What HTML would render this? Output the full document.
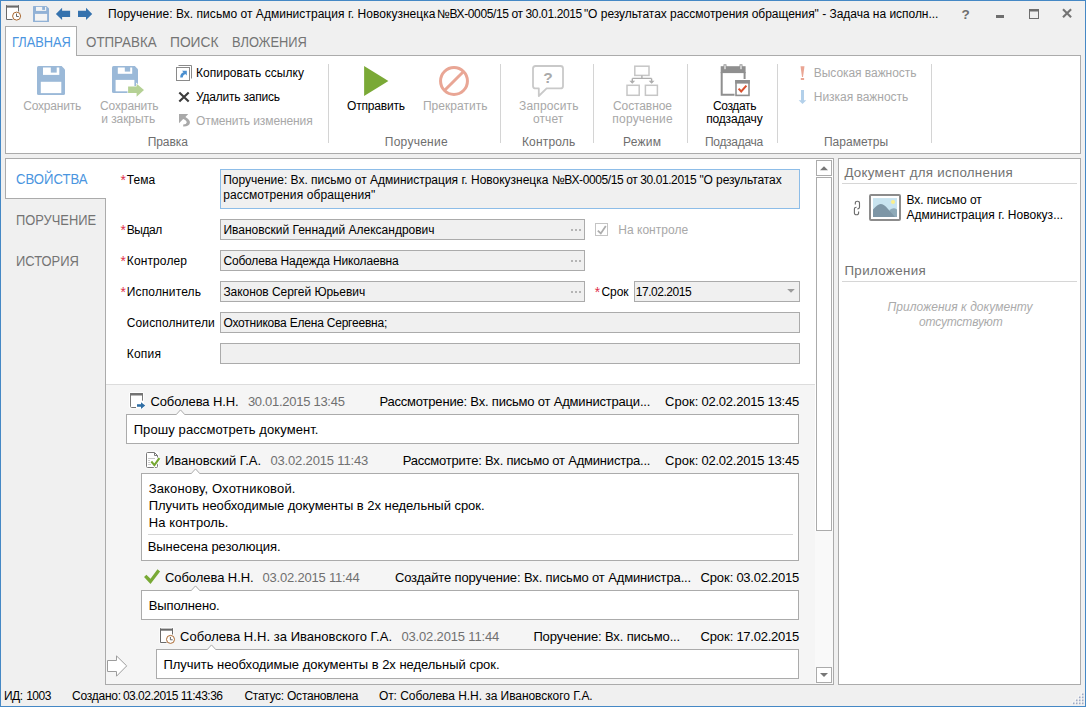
<!DOCTYPE html>
<html lang="ru"><head><meta charset="utf-8"><title>Поручение</title>
<style>
html,body{margin:0;padding:0}
body{width:1086px;height:707px;overflow:hidden;background:#f0f0f0;font-family:"Liberation Sans",sans-serif}
#win{position:relative;width:1086px;height:707px;overflow:hidden;background:#f0f0f0}
#win>*{position:absolute;box-sizing:border-box}
.t{white-space:nowrap;transform-origin:0 50%}
.b{border:1px solid #ababab;background:#fff}
.f{border:1px solid #ababab;background:#f0f0f0;height:21px}
.sep{width:1px;top:64px;height:79px;background:#d4d4d4}
.hl{height:1px;background:#d6d6d6}
svg{display:block;overflow:visible}
.q{white-space:nowrap}

</style></head>
<body>
<div id="win">
<!-- window frame -->
<div style="left:0;top:0;width:1086px;height:1px;background:#4588c5"></div>
<div style="left:0;top:706px;width:1086px;height:1px;background:#4588c5"></div>
<div style="left:0;top:0;width:1px;height:707px;background:#4588c5"></div>
<div style="left:1085px;top:0;width:1px;height:707px;background:#4588c5"></div>
<!-- ribbon -->
<div class="b" style="left:5px;top:55px;width:1076px;height:99px"></div>
<div class="b" style="left:5px;top:26px;width:72px;height:30px;border-bottom:none"></div>
<div class="sep" style="left:328px"></div>
<div class="sep" style="left:500px"></div>
<div class="sep" style="left:593px"></div>
<div class="sep" style="left:687px"></div>
<div class="sep" style="left:777px"></div>
<div class="sep" style="left:931px"></div>
<!-- main panel -->
<div class="b" style="left:105px;top:158px;width:729px;height:527px"></div>
<div class="b" style="left:5px;top:158px;width:101px;height:41px;border-right:none"></div>
<!-- history area -->
<div style="left:106px;top:384px;width:709px;height:300px;background:#f5f5f5;border-top:1px solid #dcdcdc"></div>
<!-- scrollbar -->
<div style="left:815px;top:531px;width:18px;height:153px;background:#f9f9f9"></div>
<div class="b" style="left:816px;top:160px;width:16px;height:16px"><svg width="14" height="14"><path d="M3,9.2 L7,5.2 L11,9.2 Z" fill="#777"/></svg></div>
<div class="b" style="left:816px;top:177px;width:16px;height:354px"></div>
<div class="b" style="left:816px;top:667px;width:16px;height:16px"><svg width="14" height="14"><path d="M3,5 L11,5 L7,9 Z" fill="#777"/></svg></div>
<!-- right panel -->
<div class="b" style="left:838px;top:158px;width:243px;height:527px"></div>
<div class="hl" style="left:842px;top:183px;width:235px"></div>
<div class="hl" style="left:842px;top:281px;width:235px"></div>
<!-- form fields -->
<div class="f" style="left:220px;top:169px;width:580px;height:40px;border-color:#8dbde8"></div>
<div class="f" style="left:220px;top:219px;width:365px"></div>
<div class="f" style="left:220px;top:250px;width:365px"></div>
<div class="f" style="left:220px;top:281px;width:365px"></div>
<div class="f" style="left:220px;top:312px;width:580px"></div>
<div class="f" style="left:220px;top:343px;width:580px"></div>
<div class="f" style="left:634px;top:281px;width:166px"></div>
<svg style="left:786px;top:288px" width="10" height="6"><path d="M1.2,1 L8.8,1 L5,4.8 Z" fill="#9c9c9c"/></svg>
<svg style="left:570px;top:229px" width="12" height="3"><path d="M1,0h2v2h-2z M5,0h2v2h-2z M9,0h2v2h-2z" fill="#b5b5b5"/></svg>
<svg style="left:570px;top:260px" width="12" height="3"><path d="M1,0h2v2h-2z M5,0h2v2h-2z M9,0h2v2h-2z" fill="#b5b5b5"/></svg>
<svg style="left:570px;top:291px" width="12" height="3"><path d="M1,0h2v2h-2z M5,0h2v2h-2z M9,0h2v2h-2z" fill="#b5b5b5"/></svg>
<div style="left:595px;top:223px;width:13px;height:13px;border:1px solid #c4c4c4;background:#fff"><svg width="11" height="11"><path d="M1.8,6.6 L4.8,9.4 L9.8,2" fill="none" stroke="#adadad" stroke-width="1.8"/></svg></div>
<!-- bubbles -->
<div class="b" style="left:126px;top:414px;width:673px;height:30px"></div>
<div class="b" style="left:141px;top:473px;width:658px;height:88px"></div>
<div class="b" style="left:141px;top:590px;width:658px;height:30px"></div>
<div class="b" style="left:156px;top:649px;width:643px;height:30px"></div>
<div class="hl" style="left:148px;top:534px;width:645px"></div>
<svg style="left:176px;top:409px" width="9" height="6"><rect x="0.6" y="5" width="7.8" height="1" fill="#fff"/><path d="M0.2,5.6 L4.5,0.9 L8.8,5.6" fill="#fff" stroke="#ababab"/></svg>
<svg style="left:191px;top:468px" width="9" height="6"><rect x="0.6" y="5" width="7.8" height="1" fill="#fff"/><path d="M0.2,5.6 L4.5,0.9 L8.8,5.6" fill="#fff" stroke="#ababab"/></svg>
<svg style="left:191px;top:585px" width="9" height="6"><rect x="0.6" y="5" width="7.8" height="1" fill="#fff"/><path d="M0.2,5.6 L4.5,0.9 L8.8,5.6" fill="#fff" stroke="#ababab"/></svg>
<svg style="left:207px;top:644px" width="9" height="6"><rect x="0.6" y="5" width="7.8" height="1" fill="#fff"/><path d="M0.2,5.6 L4.5,0.9 L8.8,5.6" fill="#fff" stroke="#ababab"/></svg>

<!-- title bar: app icon -->
<svg style="left:6px;top:5px" width="16" height="16" viewBox="0 0 16 16"><path d="M0.5,0.2 V14.5 H6.5 M12.5,0.2 V6.5" fill="none" stroke="#6a6a6a"/><rect x="1" y="2.5" width="11" height="11.5" fill="#fff"/><rect x="0" y="0.5" width="13" height="2.1" fill="#6a6a6a"/><circle cx="10.6" cy="11.1" r="4" fill="#fff" stroke="#a8672f" stroke-width="1"/><path d="M10.5,8.6 V11.5 H12.8" fill="none" stroke="#666" stroke-width="1"/></svg>
<!-- title bar: small save -->
<svg style="left:33px;top:6px" width="16" height="16" viewBox="0 0 16 16"><path d="M0.6,0 H13.4 L16,2.6 V15.4 Q16,16 15.4,16 H0.6 Q0,16 0,15.4 V0.6 Q0,0 0.6,0 Z" fill="#92b2d6"/><rect x="3" y="0.9" width="10.2" height="4" fill="#f4f4f4"/><rect x="9.2" y="0.3" width="2.8" height="3.6" fill="#92b2d6"/><rect x="2" y="7.9" width="12.1" height="6.8" fill="#f4f4f4"/></svg>
<!-- title bar: arrows -->
<svg style="left:55px;top:7px" width="16" height="14" viewBox="0 0 16 14"><path d="M0.9,6.9 L7.1,0.7 V3.8 H15.1 V9.9 H7.1 V13.1 Z" fill="#3572ae"/></svg>
<svg style="left:77px;top:7px" width="16" height="14" viewBox="0 0 16 14"><path d="M15.2,6.9 L9,0.7 V3.8 H1 V9.9 H9 V13.1 Z" fill="#3572ae"/></svg>
<!-- window controls -->
<svg style="left:996px;top:15px" width="8" height="3"><rect width="8" height="3" fill="#6e6e6e"/></svg>
<svg style="left:1029px;top:9px" width="10" height="10"><rect x="0.5" y="0.5" width="9" height="9" fill="none" stroke="#6e6e6e"/><rect x="0" y="0" width="10" height="2.5" fill="#6e6e6e"/></svg>
<svg style="left:1062px;top:8px" width="10" height="10"><path d="M1,1.2 L9.1,9.3 M9.1,1.2 L1,9.3" stroke="#747474" stroke-width="2.1" fill="none"/></svg>
<!-- ribbon: save big -->
<svg style="left:37px;top:66px" width="28" height="29" viewBox="0 0 28 29"><path d="M1.5,0 H24.6 L28,3.4 V27.5 Q28,29 26.5,29 H1.5 Q0,29 0,27.5 V1.5 Q0,0 1.5,0 Z" fill="#9bb9d8"/><rect x="6" y="1.5" width="16.3" height="7.4" fill="#fff"/><rect x="13.8" y="0.5" width="5.9" height="6.1" fill="#9bb9d8"/><rect x="3.8" y="15.8" width="20.5" height="11.3" fill="#fff"/></svg>
<!-- ribbon: save and close -->
<svg style="left:112px;top:66px" width="33" height="31" viewBox="0 0 33 31"><path d="M1.5,0 H22.8 L26,3.2 V25.5 Q26,27 24.5,27 H1.5 Q0,27 0,25.5 V1.5 Q0,0 1.5,0 Z" fill="#9bb9d8"/><rect x="5.8" y="1.5" width="14.4" height="6.3" fill="#fff"/><rect x="12.8" y="0.5" width="5.4" height="5.1" fill="#9bb9d8"/><rect x="3.6" y="13.9" width="18.8" height="11.4" fill="#fff"/><path d="M16.1,20.5 H24.6 V17.8 L32,24.1 L24.6,30.7 V27.1 H16.1 Z" fill="#b5d195" stroke="#fff" stroke-width="1.2" paint-order="stroke"/></svg>
<!-- ribbon: copy link -->
<svg style="left:176px;top:65px" width="17" height="17" viewBox="0 0 17 17"><path d="M2.5,0.5 H15.5 V13.5" fill="none" stroke="#8a8a8a"/><rect x="0.5" y="2.5" width="13" height="13" fill="#fff" stroke="#8a8a8a"/><path d="M6,5.8 H10.8 V10.6 L9.3,9.1 Q7,9.8 6.6,12.6 L4.2,12.4 Q4.2,8.4 7.5,7.3 Z" fill="#4a8fd0"/></svg>
<!-- ribbon: delete X -->
<svg style="left:178px;top:91px" width="12" height="12" viewBox="0 0 12 12"><path d="M1.3,1.4 L10.7,10.6 M10.7,1.4 L1.3,10.6" stroke="#3c3c3c" stroke-width="2.1" fill="none"/></svg>
<!-- ribbon: undo -->
<svg style="left:178px;top:113px" width="13" height="15" viewBox="0 0 13 15"><path d="M1,1.1 H10.2 L7.4,3.9 Q12.4,6.6 11.9,10 Q11.2,13.6 5.2,13.4 V11.6 Q8.4,11.7 8.7,9.6 Q9,7.7 5.2,6 L1,10.2 Z" fill="#a9a9a9"/></svg>
<!-- ribbon: play -->
<svg style="left:364px;top:66px" width="25" height="30" viewBox="0 0 25 30"><path d="M0.1,0.1 L24.4,15 L0.1,29.9 Z" fill="#7aa936"/></svg>
<!-- ribbon: stop -->
<svg style="left:439px;top:66px" width="30" height="30" viewBox="0 0 30 30"><circle cx="15" cy="15" r="13.45" fill="none" stroke="#e9a695" stroke-width="3"/><path d="M5.7,24.3 L24.3,5.7" stroke="#e9a695" stroke-width="3"/></svg>
<!-- ribbon: request report -->
<svg style="left:531px;top:64px" width="34" height="34" viewBox="0 0 34 34"><path d="M4.5,2 H29.5 Q32,2 32,4.5 V21.9 Q32,24.4 29.5,24.4 H15.6 L7.8,32 V24.4 H4.5 Q2,24.4 2,21.9 V4.5 Q2,2 4.5,2 Z" fill="#fff" stroke="#c9c9c9" stroke-width="1.8" stroke-linejoin="round"/></svg>
<span class="q" style="left:543.3px;top:70px;font-size:15.5px;line-height:16px;font-weight:bold;color:#aaaaaa">?</span>
<!-- ribbon: org chart -->
<svg style="left:626px;top:65px" width="32" height="31" viewBox="0 0 32 31"><g fill="#fff" stroke="#c6c6c6" stroke-width="1.5"><rect x="8.8" y="1.2" width="14.2" height="9.2"/><rect x="1" y="20.3" width="12.2" height="10"/><rect x="19.4" y="20.3" width="12" height="10"/></g><path d="M15.9,10.4 V13.4 M6.3,13.4 H25.6 M6.3,13.4 V18 M25.6,13.4 V18" fill="none" stroke="#adadad" stroke-width="1.4"/><path d="M3.4,15.8 H9.2 L6.3,18.8 Z M22.7,15.8 H28.5 L25.6,18.8 Z" fill="#adadad"/></svg>
<!-- ribbon: calendar w/ check -->
<svg style="left:720px;top:64px" width="31" height="33" viewBox="0 0 31 33"><path d="M1.7,8 V30.7 H14.5 M24.6,8 V15" fill="none" stroke="#8f8f8f" stroke-width="2"/><rect x="0.7" y="2.2" width="24.9" height="6.9" fill="#8f8f8f"/><rect x="4" y="0.8" width="2" height="4.9" fill="#fff" stroke="#8f8f8f" stroke-width="0.9"/><rect x="20" y="0.8" width="2" height="4.9" fill="#fff" stroke="#8f8f8f" stroke-width="0.9"/><rect x="16" y="16.8" width="13" height="14.6" fill="#fff" stroke="#8f8f8f" stroke-width="1.6"/><rect x="15.2" y="16" width="14.6" height="3.6" fill="#8f8f8f"/><path d="M18.6,24.6 L21.2,27.4 L26.4,21.6" fill="none" stroke="#d9502e" stroke-width="2"/></svg>
<!-- ribbon: importance -->
<svg style="left:800px;top:66px" width="5" height="15" viewBox="0 0 5 15"><path d="M0.5,0.2 H4.5 L3,11 H2 Z" fill="#eaa593"/><rect x="0.8" y="12" width="3.3" height="2" fill="#eaa593"/></svg>
<svg style="left:798px;top:90px" width="9" height="15" viewBox="0 0 9 15"><path d="M3,0.1 H6 V10.3 H8.3 L4.5,14.1 L0.7,10.3 H3 Z" fill="#b3d0ea"/></svg>
<!-- right panel: link icon + image icon -->
<svg style="left:853px;top:200px" width="8" height="16" viewBox="0 0 8 16"><path d="M2.3,4.4 V3.2 Q2.3,1.3 4.4,1.3 Q6.5,1.3 6.5,3.2 V7 Q6.5,8.9 4.4,8.9" fill="none" stroke="#6c6c6c" stroke-width="1.12"/><path d="M5.6,11.4 V13 Q5.6,14.8 3.5,14.8 Q1.4,14.8 1.4,13 V9 Q1.4,7.2 3.6,7.2" fill="none" stroke="#6c6c6c" stroke-width="1.12"/></svg>
<svg style="left:869px;top:194px" width="32" height="27" viewBox="0 0 32 27"><rect x="1" y="1" width="30" height="25" rx="1" fill="#fff" stroke="#8c8c8c" stroke-width="2"/><rect x="4" y="4.1" width="24" height="18.8" fill="#c8e4f0"/><path d="M20.5,16 Q24.5,12.6 28,15.4 V22.9 H20.5 Z" fill="#8eaab8"/><path d="M4,15.6 Q8.5,10.4 11.5,10 Q15,10 19,15 L26,22.9 H4 Z" fill="#7d96a6"/><circle cx="24" cy="7.9" r="2" fill="#fbf08a"/></svg>
<!-- history icon 1: calendar + arrow -->
<svg style="left:130px;top:393px" width="16" height="16" viewBox="0 0 16 16"><rect x="-0.9" y="-0.9" width="14.8" height="16.3" rx="1.5" fill="#fff"/><path d="M0.55,0.5 V13.4 Q0.55,14.5 1.6,14.5 H6 M12.45,0.5 V7.7" fill="none" stroke="#737373"/><rect x="1.1" y="2.5" width="10.8" height="11.5" fill="#fff"/><rect x="0.05" y="0" width="12.9" height="2.5" fill="#737373"/><path d="M7,11.2 H11 V9.2 L15.2,12.5 L11,16 V13.8 H7 Z" fill="#2e6da4" stroke="#fff" stroke-width="0.8" paint-order="stroke"/></svg>
<!-- history icon 2: doc + check -->
<svg style="left:146px;top:452px" width="14" height="16" viewBox="0 0 14 16"><rect x="-0.6" y="-0.6" width="13.4" height="17.2" rx="1.6" fill="#fff"/><path d="M1.5,0.5 H8.5 L11.5,3.5 V14.5 Q11.5,15.5 10.5,15.5 H1.5 Q0.5,15.5 0.5,14.5 V1.5 Q0.5,0.5 1.5,0.5 Z" fill="#fff" stroke="#7a7a7a"/><path d="M8.5,0.7 V3.5 H11.4" fill="none" stroke="#7a7a7a"/><path d="M2.1,6.5 H9 M2.1,8.5 H4 M2.1,10.5 H4 M2.1,12.5 H5" stroke="#c8c8c8"/><path d="M5.3,9.5 L8.4,13.1 L13.4,6.1" fill="none" stroke="#fff" stroke-width="3.8"/><path d="M5.3,9.5 L8.4,13.1 L13.4,6.1" fill="none" stroke="#76a832" stroke-width="2.1"/></svg>
<!-- history icon 3: check -->
<svg style="left:144px;top:569px" width="17" height="16" viewBox="0 0 17 16"><path d="M0.05,8.1 L2.4,5.7 L6.5,9.7 L13.5,0.2 L16.1,2.5 L6.5,15.1 Z" fill="#78a935"/></svg>
<!-- history icon 4: calendar + clock -->
<svg style="left:160px;top:628px" width="16" height="16" viewBox="0 0 16 16"><rect x="-0.7" y="-0.7" width="14.5" height="16.2" rx="1" fill="#fff" opacity="0.8"/><path d="M0.5,0.3 V14.5 H6.5 M12.5,0.3 V6.5" fill="none" stroke="#6a6a6a"/><rect x="1" y="2.5" width="11" height="11.5" fill="#fff"/><rect x="0" y="0.6" width="13" height="2.1" fill="#6a6a6a"/><circle cx="10.5" cy="11.4" r="4" fill="#fff" stroke="#a8672f" stroke-width="1"/><path d="M10.4,8.9 V11.8 H12.7" fill="none" stroke="#666" stroke-width="1"/></svg>
<!-- current marker arrow -->
<svg style="left:107px;top:655px" width="21" height="22" viewBox="0 0 21 22"><path d="M0.5,5.5 H9.5 V0.9 L19.7,10.9 L9.5,21.2 V16.5 H0.5 Z" fill="#fff" stroke="#9c9c9c"/></svg>
<!-- resize grip -->
<svg style="left:1071.6px;top:691.7px" width="13" height="13" viewBox="0 0 13 13"><g fill="#fbfbfb"><rect x="9.1" y="0.6" width="1.3" height="1.3"/><rect x="6.1" y="3.6" width="1.3" height="1.3"/><rect x="9.1" y="3.6" width="1.3" height="1.3"/><rect x="3.1" y="6.6" width="1.3" height="1.3"/><rect x="6.1" y="6.6" width="1.3" height="1.3"/><rect x="9.1" y="6.6" width="1.3" height="1.3"/><rect x="0.09999999999999998" y="9.6" width="1.3" height="1.3"/><rect x="3.1" y="9.6" width="1.3" height="1.3"/><rect x="6.1" y="9.6" width="1.3" height="1.3"/><rect x="9.1" y="9.6" width="1.3" height="1.3"/></g><g fill="#9fabc6"><rect x="10" y="1.5" width="1.5" height="1.7"/><rect x="7" y="4.5" width="1.5" height="1.7"/><rect x="10" y="4.5" width="1.5" height="1.7"/><rect x="4" y="7.5" width="1.5" height="1.7"/><rect x="7" y="7.5" width="1.5" height="1.7"/><rect x="10" y="7.5" width="1.5" height="1.7"/><rect x="1" y="10.5" width="1.5" height="1.7"/><rect x="4" y="10.5" width="1.5" height="1.7"/><rect x="7" y="10.5" width="1.5" height="1.7"/><rect x="10" y="10.5" width="1.5" height="1.7"/></g></svg>

<span class="t" id="t0" style="left:108.1px;top:8.0px;font-size:12px;line-height:12px;color:#000000;letter-spacing:0.034px;">Поручение: Вх. письмо от Администрация г. Новокузнецка </span>
<span class="t" id="t1" style="left:437.0px;top:8.0px;font-size:12px;line-height:12px;color:#000000;letter-spacing:-0.382px;">№ВХ-0005/15 от 30.01.2015 </span>
<span class="t" id="t2" style="left:583.9px;top:8.0px;font-size:12px;line-height:12px;color:#000000;letter-spacing:-0.027px;">"О результатах рассмотрения обращения" - Задача на исполн...</span>
<span class="t" id="t3" style="left:11.5px;top:34.6px;font-size:14.3px;line-height:14.3px;color:#4a95e0;transform:scaleX(0.8964);">ГЛАВНАЯ</span>
<span class="t" id="t4" style="left:85.6px;top:34.6px;font-size:14.3px;line-height:14.3px;color:#747474;transform:scaleX(0.9332);">ОТПРАВКА</span>
<span class="t" id="t5" style="left:170.1px;top:34.6px;font-size:14.3px;line-height:14.3px;color:#747474;transform:scaleX(0.9637);">ПОИСК</span>
<span class="t" id="t6" style="left:232.3px;top:34.6px;font-size:14.3px;line-height:14.3px;color:#747474;transform:scaleX(0.8999);">ВЛОЖЕНИЯ</span>
<span class="t" id="t7" style="left:23.2px;top:99.6px;font-size:12px;line-height:12px;color:#a8a8a8;letter-spacing:-0.182px;">Сохранить</span>
<span class="t" id="t8" style="left:100.1px;top:99.6px;font-size:12px;line-height:12px;color:#a8a8a8;letter-spacing:-0.149px;">Сохранить</span>
<span class="t" id="t9" style="left:101.3px;top:112.6px;font-size:12px;line-height:12px;color:#a8a8a8;letter-spacing:-0.080px;">и закрыть</span>
<span class="t" id="t10" style="left:196.0px;top:67.0px;font-size:12px;line-height:12px;color:#000000;letter-spacing:0.067px;">Копировать ссылку</span>
<span class="t" id="t11" style="left:196.0px;top:91.3px;font-size:12px;line-height:12px;color:#000000;letter-spacing:-0.213px;">Удалить запись</span>
<span class="t" id="t12" style="left:196.0px;top:114.6px;font-size:12px;line-height:12px;color:#a8a8a8;letter-spacing:-0.102px;">Отменить изменения</span>
<span class="t" id="t13" style="left:147.7px;top:136.0px;font-size:12px;line-height:12px;color:#6e6e6e;letter-spacing:-0.058px;">Правка</span>
<span class="t" id="t14" style="left:347.0px;top:99.6px;font-size:12px;line-height:12px;color:#000000;letter-spacing:-0.191px;">Отправить</span>
<span class="t" id="t15" style="left:422.9px;top:99.6px;font-size:12px;line-height:12px;color:#a8a8a8;letter-spacing:0.033px;">Прекратить</span>
<span class="t" id="t16" style="left:384.8px;top:136.0px;font-size:12px;line-height:12px;color:#6e6e6e;letter-spacing:0.258px;">Поручение</span>
<span class="t" id="t17" style="left:519.1px;top:99.6px;font-size:12px;line-height:12px;color:#a8a8a8;letter-spacing:0.142px;">Запросить</span>
<span class="t" id="t18" style="left:533.0px;top:112.6px;font-size:12px;line-height:12px;color:#a8a8a8;letter-spacing:0.092px;">отчет</span>
<span class="t" id="t19" style="left:521.9px;top:136.0px;font-size:12px;line-height:12px;color:#6e6e6e;letter-spacing:0.184px;">Контроль</span>
<span class="t" id="t20" style="left:613.0px;top:99.6px;font-size:12px;line-height:12px;color:#a8a8a8;letter-spacing:-0.104px;">Составное</span>
<span class="t" id="t21" style="left:612.3px;top:112.6px;font-size:12px;line-height:12px;color:#a8a8a8;letter-spacing:0.207px;">поручение</span>
<span class="t" id="t22" style="left:623.0px;top:136.0px;font-size:12px;line-height:12px;color:#6e6e6e;letter-spacing:0.220px;">Режим</span>
<span class="t" id="t23" style="left:712.9px;top:99.6px;font-size:12px;line-height:12px;color:#000000;letter-spacing:-0.330px;">Создать</span>
<span class="t" id="t24" style="left:706.2px;top:112.6px;font-size:12px;line-height:12px;color:#000000;letter-spacing:-0.161px;">подзадачу</span>
<span class="t" id="t25" style="left:704.9px;top:136.0px;font-size:12px;line-height:12px;color:#6e6e6e;letter-spacing:-0.274px;">Подзадача</span>
<span class="t" id="t26" style="left:813.8px;top:66.8px;font-size:12px;line-height:12px;color:#a8a8a8;letter-spacing:-0.053px;">Высокая важность</span>
<span class="t" id="t27" style="left:813.8px;top:90.7px;font-size:12px;line-height:12px;color:#a8a8a8;letter-spacing:-0.033px;">Низкая важность</span>
<span class="t" id="t28" style="left:823.9px;top:136.0px;font-size:12px;line-height:12px;color:#6e6e6e;letter-spacing:0.037px;">Параметры</span>
<span class="t" id="t29" style="left:16.0px;top:171.8px;font-size:14.3px;line-height:14.3px;color:#4a95e0;transform:scaleX(0.9170);">СВОЙСТВА</span>
<span class="t" id="t30" style="left:16.0px;top:212.5px;font-size:14.3px;line-height:14.3px;color:#747474;transform:scaleX(0.9009);">ПОРУЧЕНИЕ</span>
<span class="t" id="t31" style="left:16.0px;top:253.8px;font-size:14.3px;line-height:14.3px;color:#747474;transform:scaleX(0.9052);">ИСТОРИЯ</span>
<span class="t" id="t32" style="left:120.4px;top:174.0px;font-size:13.8px;line-height:13.8px;color:#e02f4a;letter-spacing:0.625px;">*</span>
<span class="t" id="t33" style="left:126.8px;top:174.0px;font-size:12px;line-height:12px;color:#000000;letter-spacing:0.034px;">Тема</span>
<span class="t" id="t34" style="left:120.4px;top:223.8px;font-size:13.8px;line-height:13.8px;color:#e02f4a;letter-spacing:0.625px;">*</span>
<span class="t" id="t35" style="left:126.8px;top:223.8px;font-size:12px;line-height:12px;color:#000000;letter-spacing:-0.442px;">Выдал</span>
<span class="t" id="t36" style="left:120.4px;top:254.8px;font-size:13.8px;line-height:13.8px;color:#e02f4a;letter-spacing:0.625px;">*</span>
<span class="t" id="t37" style="left:126.8px;top:254.8px;font-size:12px;line-height:12px;color:#000000;letter-spacing:0.118px;">Контролер</span>
<span class="t" id="t38" style="left:120.4px;top:285.6px;font-size:13.8px;line-height:13.8px;color:#e02f4a;letter-spacing:0.625px;">*</span>
<span class="t" id="t39" style="left:126.8px;top:285.6px;font-size:12px;line-height:12px;color:#000000;letter-spacing:0.139px;">Исполнитель</span>
<span class="t" id="t40" style="left:126.8px;top:316.7px;font-size:12px;line-height:12px;color:#000000;letter-spacing:0.113px;">Соисполнители</span>
<span class="t" id="t41" style="left:126.8px;top:347.7px;font-size:12px;line-height:12px;color:#000000;letter-spacing:0.205px;">Копия</span>
<span class="t" id="t42" style="left:594.7px;top:286.0px;font-size:13.8px;line-height:13.8px;color:#e02f4a;letter-spacing:0.625px;">*</span>
<span class="t" id="t43" style="left:601.4px;top:285.6px;font-size:12px;line-height:12px;color:#000000;letter-spacing:-0.016px;">Срок</span>
<span class="t" id="t44" style="left:223.2px;top:174.0px;font-size:12px;line-height:12px;color:#000000;letter-spacing:-0.006px;">Поручение: Вх. письмо от Администрация г. Новокузнецка </span>
<span class="t" id="t45" style="left:551.9px;top:174.0px;font-size:12px;line-height:12px;color:#000000;letter-spacing:-0.402px;">№ВХ-0005/15 от 30.01.2015 </span>
<span class="t" id="t46" style="left:699.4px;top:174.0px;font-size:12px;line-height:12px;color:#000000;letter-spacing:-0.075px;">"О результатах </span>
<span class="t" id="t47" style="left:223.2px;top:189.0px;font-size:12px;line-height:12px;color:#000000;letter-spacing:0.116px;">рассмотрения обращения"</span>
<span class="t" id="t48" style="left:223.4px;top:223.8px;font-size:12px;line-height:12px;color:#000000;letter-spacing:0.001px;">Ивановский Геннадий Александрович</span>
<span class="t" id="t49" style="left:223.4px;top:254.8px;font-size:12px;line-height:12px;color:#000000;letter-spacing:-0.165px;">Соболева Надежда Николаевна</span>
<span class="t" id="t50" style="left:223.4px;top:285.6px;font-size:12px;line-height:12px;color:#000000;letter-spacing:-0.054px;">Законов Сергей Юрьевич</span>
<span class="t" id="t51" style="left:223.4px;top:316.7px;font-size:12px;line-height:12px;color:#000000;letter-spacing:-0.211px;">Охотникова Елена Сергеевна;</span>
<span class="t" id="t52" style="left:635.8px;top:286.0px;font-size:12px;line-height:12px;color:#000000;letter-spacing:-0.476px;">17.02.2015</span>
<span class="t" id="t53" style="left:618.2px;top:224.0px;font-size:12px;line-height:12px;color:#a8a8a8;letter-spacing:0.034px;">На контроле</span>
<span class="t" id="t54" style="left:150.4px;top:394.7px;font-size:13px;line-height:13px;color:#000000;letter-spacing:-0.095px;">Соболева Н.Н.</span>
<span class="t" id="t55" style="left:247.9px;top:394.7px;font-size:13px;line-height:13px;color:#707070;letter-spacing:-0.282px;">30.01.2015 13:45</span>
<span class="t" id="t56" style="left:379.4px;top:394.7px;font-size:13px;line-height:13px;color:#000000;letter-spacing:-0.194px;">Рассмотрение: Вх. письмо от Администраци...</span>
<span class="t" id="t57" style="left:665.1px;top:395.0px;font-size:13px;line-height:13px;color:#000000;letter-spacing:0.009px;">Срок: </span>
<span class="t" id="t58" style="left:701.4px;top:395.0px;font-size:13px;line-height:13px;color:#000000;letter-spacing:-0.226px;">02.02.2015 13:45</span>
<span class="t" id="t59" style="left:133.7px;top:422.6px;font-size:13px;line-height:13px;color:#000000;letter-spacing:0.089px;">Прошу рассмотреть документ.</span>
<span class="t" id="t60" style="left:165.0px;top:453.7px;font-size:13px;line-height:13px;color:#000000;letter-spacing:-0.006px;">Ивановский Г.А.</span>
<span class="t" id="t61" style="left:270.4px;top:453.7px;font-size:13px;line-height:13px;color:#707070;letter-spacing:-0.159px;">03.02.2015 11:43</span>
<span class="t" id="t62" style="left:402.7px;top:453.7px;font-size:13px;line-height:13px;color:#000000;letter-spacing:-0.208px;">Рассмотрите: Вх. письмо от Администра...</span>
<span class="t" id="t63" style="left:665.1px;top:454.0px;font-size:13px;line-height:13px;color:#000000;letter-spacing:0.009px;">Срок: </span>
<span class="t" id="t64" style="left:701.4px;top:454.0px;font-size:13px;line-height:13px;color:#000000;letter-spacing:-0.226px;">02.02.2015 13:45</span>
<span class="t" id="t65" style="left:148.7px;top:481.6px;font-size:13px;line-height:13px;color:#000000;letter-spacing:0.169px;">Законову, Охотниковой.</span>
<span class="t" id="t66" style="left:148.7px;top:499.0px;font-size:13px;line-height:13px;color:#000000;letter-spacing:-0.030px;">Плучить необходимые документы в 2х недельный срок.</span>
<span class="t" id="t67" style="left:148.7px;top:516.0px;font-size:13px;line-height:13px;color:#000000;letter-spacing:0.110px;">На контроль.</span>
<span class="t" id="t68" style="left:147.7px;top:539.7px;font-size:13px;line-height:13px;color:#000000;letter-spacing:-0.048px;">Вынесена резолюция.</span>
<span class="t" id="t69" style="left:165.0px;top:570.5px;font-size:13px;line-height:13px;color:#000000;letter-spacing:-0.064px;">Соболева Н.Н.</span>
<span class="t" id="t70" style="left:262.4px;top:570.5px;font-size:13px;line-height:13px;color:#707070;letter-spacing:-0.191px;">03.02.2015 11:44</span>
<span class="t" id="t71" style="left:394.9px;top:570.5px;font-size:13px;line-height:13px;color:#000000;letter-spacing:-0.132px;">Создайте поручение: Вх. письмо от Администра...</span>
<span class="t" id="t72" style="left:700.4px;top:571.0px;font-size:13px;line-height:13px;color:#000000;letter-spacing:-0.071px;">Срок: </span>
<span class="t" id="t73" style="left:736.4px;top:571.0px;font-size:13px;line-height:13px;color:#000000;letter-spacing:-0.248px;">03.02.2015</span>
<span class="t" id="t74" style="left:148.7px;top:598.6px;font-size:13px;line-height:13px;color:#000000;letter-spacing:-0.112px;">Выполнено.</span>
<span class="t" id="t75" style="left:180.0px;top:629.6px;font-size:13px;line-height:13px;color:#000000;letter-spacing:0.047px;">Соболева Н.Н. за Ивановского Г.А.</span>
<span class="t" id="t76" style="left:401.4px;top:629.6px;font-size:13px;line-height:13px;color:#707070;letter-spacing:-0.159px;">03.02.2015 11:44</span>
<span class="t" id="t77" style="left:533.4px;top:629.6px;font-size:13px;line-height:13px;color:#000000;letter-spacing:-0.133px;">Поручение: Вх. письмо...</span>
<span class="t" id="t78" style="left:700.4px;top:630.0px;font-size:13px;line-height:13px;color:#000000;letter-spacing:-0.071px;">Срок: </span>
<span class="t" id="t79" style="left:736.4px;top:630.0px;font-size:13px;line-height:13px;color:#000000;letter-spacing:-0.248px;">17.02.2015</span>
<span class="t" id="t80" style="left:163.4px;top:658.0px;font-size:13px;line-height:13px;color:#000000;letter-spacing:-0.024px;">Плучить необходимые документы в 2х недельный срок.</span>
<span class="t" id="t81" style="left:3.9px;top:690.0px;font-size:12px;line-height:12px;color:#000000;letter-spacing:-0.431px;">ИД: </span>
<span class="t" id="t82" style="left:26.2px;top:690.0px;font-size:12px;line-height:12px;color:#000000;letter-spacing:-0.501px;">1003</span>
<span class="t" id="t83" style="left:72.0px;top:690.0px;font-size:12px;line-height:12px;color:#000000;letter-spacing:-0.246px;">Создано: </span>
<span class="t" id="t84" style="left:122.9px;top:690.0px;font-size:12px;line-height:12px;color:#000000;letter-spacing:-0.506px;">03.02.2015 11:43:36</span>
<span class="t" id="t85" style="left:244.4px;top:690.0px;font-size:12px;line-height:12px;color:#000000;letter-spacing:-0.245px;">Статус: Остановлена</span>
<span class="t" id="t86" style="left:378.9px;top:690.0px;font-size:12px;line-height:12px;color:#000000;letter-spacing:-0.058px;">От: Соболева Н.Н. за Ивановского Г.А.</span>
<span class="t" id="t87" style="left:844.4px;top:166.1px;font-size:13.33px;line-height:13.33px;color:#727272;letter-spacing:0.273px;">Документ для исполнения</span>
<span class="t" id="t88" style="left:906.4px;top:193.8px;font-size:12px;line-height:12px;color:#000000;letter-spacing:-0.066px;">Вх. письмо от</span>
<span class="t" id="t89" style="left:906.4px;top:208.6px;font-size:12px;line-height:12px;color:#000000;letter-spacing:0.020px;">Администрация г. Новокуз...</span>
<span class="t" id="t90" style="left:844.4px;top:264.1px;font-size:13.33px;line-height:13.33px;color:#727272;letter-spacing:0.382px;">Приложения</span>
<span class="t" id="t91" style="left:887.6px;top:300.7px;font-size:12px;line-height:12px;color:#ababab;font-style:italic;letter-spacing:0.028px;">Приложения к документу</span>
<span class="t" id="t92" style="left:918.9px;top:315.5px;font-size:12px;line-height:12px;color:#ababab;font-style:italic;letter-spacing:-0.132px;">отсутствуют</span>
<span class="t" id="t93" style="left:961.4px;top:7.8px;font-size:13.5px;line-height:13.5px;color:#6e6e6e;font-weight:bold;letter-spacing:0.150px;">?</span>
</div>
</body></html>
